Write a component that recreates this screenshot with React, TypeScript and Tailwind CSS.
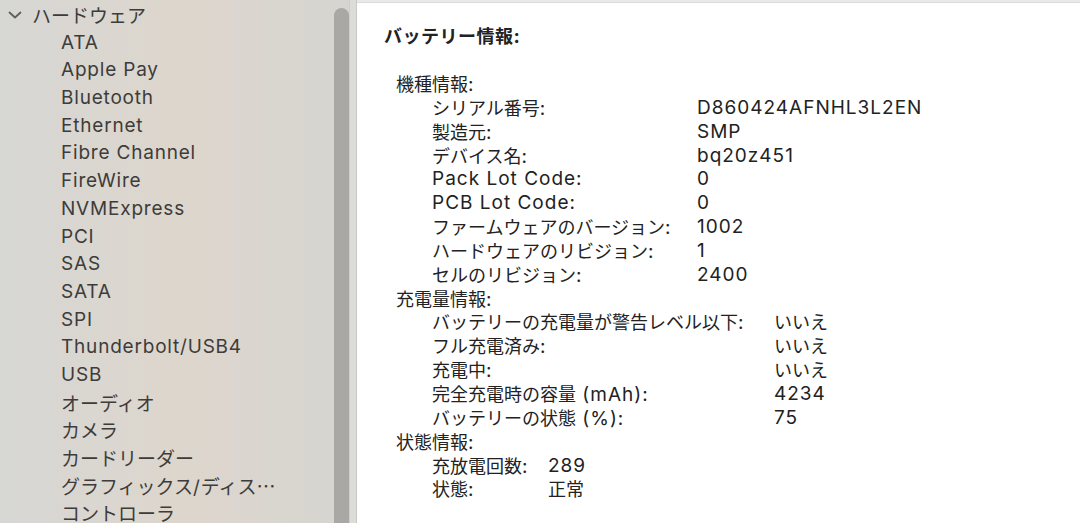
import React from 'react';

const sidebarItems = [
  'ATA',
  'Apple Pay',
  'Bluetooth',
  'Ethernet',
  'Fibre Channel',
  'FireWire',
  'NVMExpress',
  'PCI',
  'SAS',
  'SATA',
  'SPI',
  'Thunderbolt/USB4',
  'USB',
  'オーディオ',
  'カメラ',
  'カードリーダー',
  'グラフィックス/ディス…',
  'コントローラ',
];

type Group = { title: string; labelWidth: string; rows: [string, string][] };

const groups: Group[] = [
  {
    title: '機種情報:',
    labelWidth: 'grid-cols-[265px_1fr]',
    rows: [
      ['シリアル番号:', 'D860424AFNHL3L2EN'],
      ['製造元:', 'SMP'],
      ['デバイス名:', 'bq20z451'],
      ['Pack Lot Code:', '0'],
      ['PCB Lot Code:', '0'],
      ['ファームウェアのバージョン:', '1002'],
      ['ハードウェアのリビジョン:', '1'],
      ['セルのリビジョン:', '2400'],
    ],
  },
  {
    title: '充電量情報:',
    labelWidth: 'grid-cols-[342px_1fr]',
    rows: [
      ['バッテリーの充電量が警告レベル以下:', 'いいえ'],
      ['フル充電済み:', 'いいえ'],
      ['充電中:', 'いいえ'],
      ['完全充電時の容量 (mAh):', '4234'],
      ['バッテリーの状態 (%):', '75'],
    ],
  },
  {
    title: '状態情報:',
    labelWidth: 'grid-cols-[116px_1fr]',
    rows: [
      ['充放電回数:', '289'],
      ['状態:', '正常'],
    ],
  },
];

// Latin runs get a slightly wider setting so they read like the system font;
// Japanese runs use the CJK face directly.
function Mixed({ text, latin }: { text: string; latin: string }) {
  const parts = text.match(/[\x20-\x7e]+|[^\x20-\x7e]+/g) || [];
  return (
    <>
      {parts.map((p, i) =>
        /^[\x20-\x7e]+$/.test(p) ? (
          <span key={i} className={latin}>
            {p}
          </span>
        ) : (
          <span key={i} style={{ fontFamily: '"Noto Sans CJK JP", sans-serif' }}>
            {p}
          </span>
        )
      )}
    </>
  );
}

function Chevron() {
  return (
    <svg width="14" height="8" viewBox="0 0 14 8" fill="none" className="shrink-0">
      <path d="M1.5 1.5 L7 6.5 L12.5 1.5" stroke="#5f5e5b" strokeWidth="1.8" strokeLinecap="round" strokeLinejoin="round" />
    </svg>
  );
}

const sideLatin = 'tracking-[0.8px]';
const mainLatin = 'text-[19px] tracking-[1px]';

export default function App() {
  return (
    <div
      lang="ja"
      className="w-[1080px] h-[523px] flex overflow-hidden bg-white"
      style={{ fontFamily: '"Inter", "Noto Sans CJK JP", sans-serif' }}
    >
      {/* Sidebar */}
      <div className="w-[357px] shrink-0 flex bg-gradient-to-r from-[#d7d7d4] via-[#ddd6cd] to-[#d6d5d1]">
        <div className="flex-1 pt-[1px] text-[19px] leading-[27.7px] text-[#3d3c3a]">
          <div className="h-[27.7px] flex items-center gap-[10px] pl-[8px]">
            <Chevron />
            <span style={{ fontFamily: '"Noto Sans CJK JP", sans-serif' }}>ハードウェア</span>
          </div>
          {sidebarItems.map((item) => (
            <div key={item} className="h-[27.7px] pl-[61px] whitespace-nowrap">
              <Mixed text={item} latin={sideLatin} />
            </div>
          ))}
        </div>
        {/* Scrollbar */}
        <div className="w-[15px] flex flex-col pt-[8px]">
          <div className="flex-1 bg-[#a9a8a5] rounded-t-full" />
        </div>
        <div className="w-[7px] bg-[#dddcd9] border-l border-[#cfcecb]" />
        <div className="w-px bg-[#c9c9c7]" />
      </div>

      {/* Content */}
      <div className="flex-1 flex flex-col">
        <div className="h-[3px] bg-[#e9e9e9] border-b border-[#dcdcdc]" />
        <div className="pl-[27px] pt-[19px] text-[18px] text-[#222222]">
          <div className="h-[26px] font-bold leading-[26px] tracking-[0.5px]">
            <Mixed text="バッテリー情報:" latin="text-[19px]" />
          </div>
          <div className="mt-[24px] leading-[23.85px]">
            {groups.map((g) => (
              <div key={g.title}>
                <div className="h-[23.85px] pl-[12px] whitespace-nowrap">
                  <Mixed text={g.title} latin={mainLatin} />
                </div>
                <div className={`grid ${g.labelWidth} auto-rows-[23.85px] pl-[48px]`}>
                  {g.rows.map(([label, value]) => (
                    <React.Fragment key={label}>
                      <div className="h-[23.85px] whitespace-nowrap">
                        <Mixed text={label} latin={mainLatin} />
                      </div>
                      <div className="h-[23.85px] whitespace-nowrap">
                        <Mixed text={value} latin={mainLatin} />
                      </div>
                    </React.Fragment>
                  ))}
                </div>
              </div>
            ))}
          </div>
        </div>
      </div>
    </div>
  );
}
